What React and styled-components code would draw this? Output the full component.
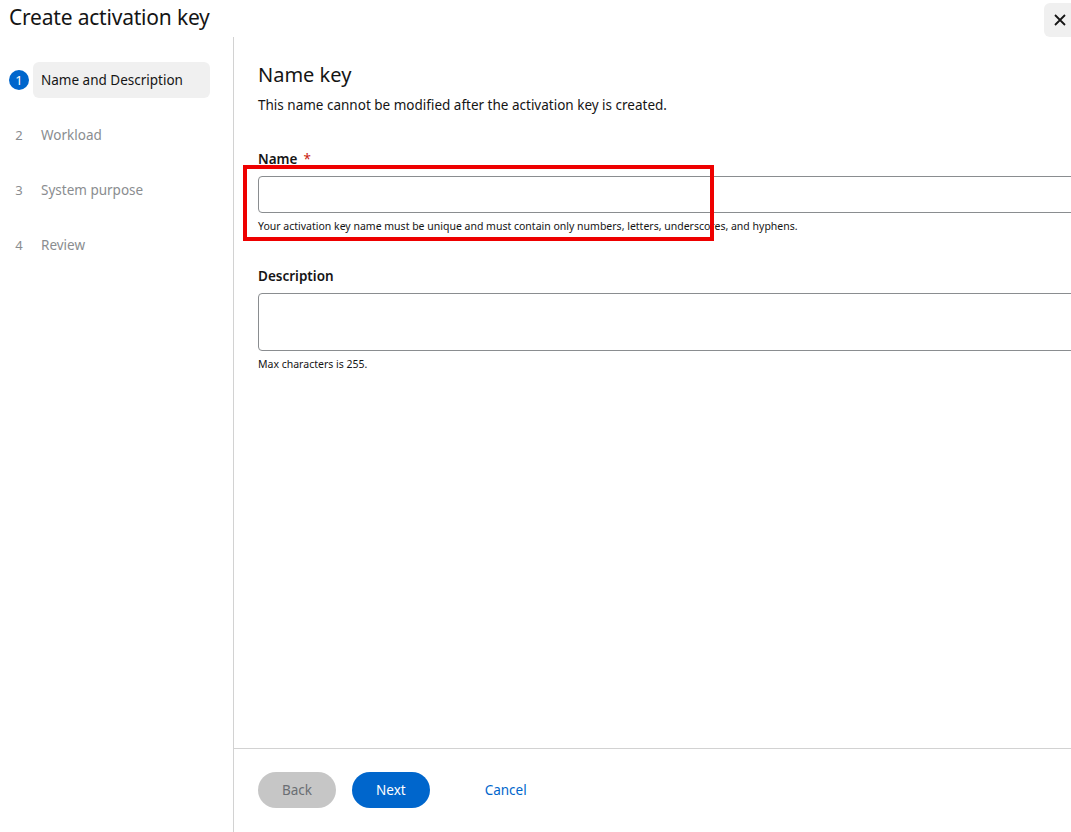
import React from "react";
import styled, { createGlobalStyle } from "styled-components";

const Global = createGlobalStyle`
  html, body { margin: 0; padding: 0; background: #fff; overflow: hidden; }
  body { font-family: "Noto Sans", "Liberation Sans", sans-serif; color: #151515; }
`;

const Page = styled.div`
  width: 1071px; height: 832px; display: flex; flex-direction: column; position: relative; overflow: hidden;
`;
const Header = styled.div`
  height: 37px; display: flex; justify-content: space-between; align-items: flex-start;
`;
const Title = styled.h1`
  margin: 3px 0 0 9px; font-size: 21px; font-weight: 400; letter-spacing: -0.2px;
`;
const Close = styled.button`
  margin-top: 3px; width: 27px; height: 34px; border: 0; background: #f0f0f0;
  border-radius: 6px 0 0 6px; display: flex; align-items: center; justify-content: center; padding: 0 0 0 4px;
`;
const Body = styled.div`flex: 1; display: flex; min-height: 0;`;
const Nav = styled.nav`
  width: 234px; border-right: 1px solid #d2d2d2; padding-top: 25px; box-sizing: border-box;
  display: flex; flex-direction: column; gap: 19px;
`;
const Step = styled.div`display: flex; align-items: center; height: 36px; padding-left: 9px;`;
const Num = styled.span`
  width: 20px; height: 20px; border-radius: 50%; display: flex; align-items: center; justify-content: center;
  font-size: 13px; margin-right: 4px;
  background: ${p => p.$active ? "#0066cc" : "transparent"};
  color: ${p => p.$active ? "#fff" : "#8a8d90"};
`;
const StepLabel = styled.span`
  width: 177px; height: 36px; display: flex; align-items: center; padding-left: 8px; box-sizing: border-box;
  border-radius: 6px; font-size: 13.5px;
  background: ${p => p.$active ? "#f0f0f0" : "transparent"};
  color: ${p => p.$active ? "#151515" : "#8a8d90"};
`;
const Main = styled.div`flex: 1; display: flex; flex-direction: column; min-width: 0;`;
const Content = styled.div`flex: 1; padding: 24px 0 0 24px;`;
const H2 = styled.h2`margin: 0; font-size: 20px; font-weight: 400;`;
const Intro = styled.p`margin: 8px 0 0; font-size: 13.5px;`;
const Field = styled.div`margin-top: ${p => p.$mt}px; display: flex; flex-direction: column;`;
const Label = styled.label`font-size: 13.5px; font-weight: 600; margin-bottom: 8px; line-height: 18px;`;
const Req = styled.span`color: #c9190b; margin-left: 6px; font-weight: 400;`;
const Input = styled.div`
  width: 900px; height: ${p => p.$h}px; border: 1px solid #8a8d90; border-radius: 4px; box-sizing: border-box;
`;
const Help = styled.div`font-size: 10.5px; margin-top: 6px;`;
const Footer = styled.div`
  height: 81px; border-top: 1px solid #d2d2d2; display: flex; align-items: center; gap: 16px; padding: 0 0 2px 24px;
`;
const Btn = styled.button`
  height: 36px; border: 0; border-radius: 18px; font: inherit; font-size: 13.5px; padding: 0 ${p => p.$px}px;
  background: ${p => p.$bg}; color: ${p => p.$fg};
`;
const Highlight = styled.div`
  position: absolute; left: 243px; top: 165px; width: 471px; height: 76px;
  border: 4px solid #ee0000; box-sizing: border-box;
`;

export default function App() {
  const steps = ["Name and Description", "Workload", "System purpose", "Review"];
  return (
    <Page>
      <Global />
      <Header>
        <Title>Create activation key</Title>
        <Close aria-label="close">
          <svg width="14" height="14" viewBox="0 0 14 14"><path d="M2 2L12 12M12 2L2 12" stroke="#151515" strokeWidth="1.8" /></svg>
        </Close>
      </Header>
      <Body>
        <Nav>
          {steps.map((s, i) => (
            <Step key={s}>
              <Num $active={i === 0}>{i + 1}</Num>
              <StepLabel $active={i === 0}>{s}</StepLabel>
            </Step>
          ))}
        </Nav>
        <Main>
          <Content>
            <H2>Name key</H2>
            <Intro>This name cannot be modified after the activation key is created.</Intro>
            <Field $mt={36}>
              <Label>Name<Req>*</Req></Label>
              <Input $h={37} />
              <Help>Your activation key name must be unique and must contain only numbers, letters, underscores, and hyphens.</Help>
            </Field>
            <Field $mt={34}>
              <Label>Description</Label>
              <Input $h={58} />
              <Help>Max characters is 255.</Help>
            </Field>
          </Content>
          <Footer>
            <Btn $bg="#c6c6c6" $fg="#6a6e73" $px={24}>Back</Btn>
            <Btn $bg="#0066cc" $fg="#fff" $px={24}>Next</Btn>
            <Btn $bg="transparent" $fg="#0066cc" $px={39}>Cancel</Btn>
          </Footer>
        </Main>
      </Body>
      <Highlight />
    </Page>
  );
}
